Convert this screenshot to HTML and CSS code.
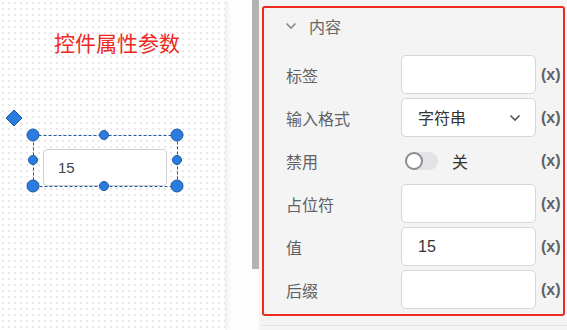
FILE: index.html
```html
<!DOCTYPE html>
<html>

<head>
    <title>控件属性</title>
    <link rel="stylesheet" href="styles.css">
</head>

<body>
    <!-- Design canvas -->
    <div class="canvas">
        <div class="canvas-title">控件属性参数</div>
        <div class="canvas-input">15</div>
        <svg class="selection" width="200" height="200" viewBox="0 0 200 200">
            <rect x="33.5" y="135.5" width="144" height="51" fill="none" stroke="#1d5aa0" stroke-width="1" stroke-dasharray="3 2" />
            <path d="M14 110 L22 118 L14 126 L6 118 Z" fill="#2c7be0" stroke="#1d5aa0" stroke-width="1" />
            <circle cx="33" cy="135" r="6" class="handle" />
            <circle cx="177" cy="135" r="6" class="handle" />
            <circle cx="33" cy="186" r="6" class="handle" />
            <circle cx="177" cy="186" r="6" class="handle" />
            <circle cx="104" cy="135" r="4.5" class="handle" />
            <circle cx="104" cy="186" r="4.5" class="handle" />
            <circle cx="33" cy="160" r="4.5" class="handle" />
            <circle cx="177" cy="160" r="4.5" class="handle" />
        </svg>
    </div>

    <!-- Scroll gutter -->
    <div class="gutter">
        <div class="scroll-thumb"></div>
    </div>

    <!-- Property panel -->
    <div class="panel">
        <div class="group">
            <div class="group-head">
                <svg class="chev" width="12" height="8" viewBox="0 0 12 8">
                    <path d="M1.5 1.5 L6 6 L10.5 1.5" fill="none" stroke="#8a8a8a" stroke-width="1.6" />
                </svg>
                <span>内容</span>
            </div>

            <div class="row">
                <label>标签</label>
                <div class="field"></div>
                <span class="expr">(x)</span>
            </div>
            <div class="row">
                <label>输入格式</label>
                <div class="field select">
                    <span>字符串</span>
                    <svg width="12" height="8" viewBox="0 0 12 8">
                        <path d="M1.5 1.5 L6 6 L10.5 1.5" fill="none" stroke="#555" stroke-width="1.6" />
                    </svg>
                </div>
                <span class="expr">(x)</span>
            </div>
            <div class="row">
                <label>禁用</label>
                <div class="switch-wrap">
                    <span class="switch"><span class="knob"></span></span>
                    <span class="switch-text">关</span>
                </div>
                <span class="expr">(x)</span>
            </div>
            <div class="row">
                <label>占位符</label>
                <div class="field"></div>
                <span class="expr">(x)</span>
            </div>
            <div class="row">
                <label>值</label>
                <div class="field">15</div>
                <span class="expr">(x)</span>
            </div>
            <div class="row">
                <label>后缀</label>
                <div class="field"></div>
                <span class="expr">(x)</span>
            </div>
        </div>
        <div class="divider"></div>
    </div>
</body>

</html>
```

FILE: styles.css
```css
body {
    margin: 0;
    width: 567px;
    height: 330px;
    overflow: hidden;
    display: flex;
    font-family: "Noto Sans CJK SC", "Liberation Sans", sans-serif;
    background-color: #fff;
}

.canvas {
    position: relative;
    width: 225px;
    height: 330px;
    flex: none;
    background-color: #fff;
    background-image: radial-gradient(circle, #dcdcdc 0.6px, transparent 0.9px);
    background-size: 6px 6px;
    box-shadow: 2px 0 5px rgba(0, 0, 0, 0.08);
    z-index: 1;
}

.canvas-title {
    position: absolute;
    left: 54px;
    top: 28px;
    font-size: 21px;
    line-height: 28px;
    color: #ee2a1e;
}

.canvas-input {
    position: absolute;
    left: 43px;
    top: 149px;
    width: 124px;
    height: 37px;
    box-sizing: border-box;
    border: 1px solid #cfcfcf;
    border-radius: 4px;
    background-color: #fff;
    padding-left: 14px;
    font-size: 15px;
    line-height: 35px;
    color: #444;
    font-family: "Liberation Sans", sans-serif;
}

.selection {
    position: absolute;
    left: 0;
    top: 0;
}

.handle {
    fill: #2c7be0;
    stroke: #1d5aa0;
    stroke-width: 1;
}

.gutter {
    width: 34px;
    flex: none;
    display: flex;
    justify-content: flex-end;
    background-color: #fdfdfd;
}

.scroll-thumb {
    width: 7px;
    height: 269px;
    background-color: #b3b3b3;
}

.panel {
    flex: 1;
    background-color: #f4f4f4;
    padding-top: 6px;
    padding-left: 3px;
}

.group {
    width: 303px;
    height: 310px;
    box-sizing: border-box;
    border: 2px solid #ee2a1e;
    border-radius: 3px;
    padding: 0 0 0 22px;
}

.group-head {
    display: flex;
    align-items: center;
    height: 36px;
    margin-bottom: 11px;
    font-size: 16px;
    color: #666;
}

.chev {
    margin-left: -1px;
    margin-right: 12px;
}

.row {
    display: flex;
    align-items: center;
    height: 39px;
    margin-bottom: 4px;
}

.row label {
    width: 115px;
    font-size: 16px;
    color: #606266;
}

.field {
    width: 135px;
    height: 39px;
    box-sizing: border-box;
    border: 1px solid #d4d6da;
    border-radius: 5px;
    background-color: #fff;
    padding-left: 16px;
    font-size: 16px;
    line-height: 37px;
    color: #333;
    font-family: "Liberation Sans", sans-serif;
}

.select {
    display: flex;
    align-items: center;
    justify-content: space-between;
    padding-right: 14px;
    font-family: "Noto Sans CJK SC", sans-serif;
}

.switch-wrap {
    width: 135px;
    display: flex;
    align-items: center;
    padding-left: 4px;
    box-sizing: border-box;
}

.switch {
    position: relative;
    width: 33px;
    height: 18px;
    border-radius: 9px;
    background-color: #e2e3e6;
}

.knob {
    position: absolute;
    left: 0;
    top: 0;
    width: 18px;
    height: 18px;
    box-sizing: border-box;
    border: 2px solid #8c8c8c;
    border-radius: 50%;
    background-color: #fff;
}

.switch-text {
    margin-left: 14px;
    font-size: 16px;
    color: #333;
}

.expr {
    margin-left: 5px;
    font-family: "Liberation Sans", sans-serif;
    font-weight: bold;
    font-size: 16px;
    color: #606266;
}

.divider {
    margin-top: 9px;
    height: 1px;
    background-color: #e2e2e2;
}
```
